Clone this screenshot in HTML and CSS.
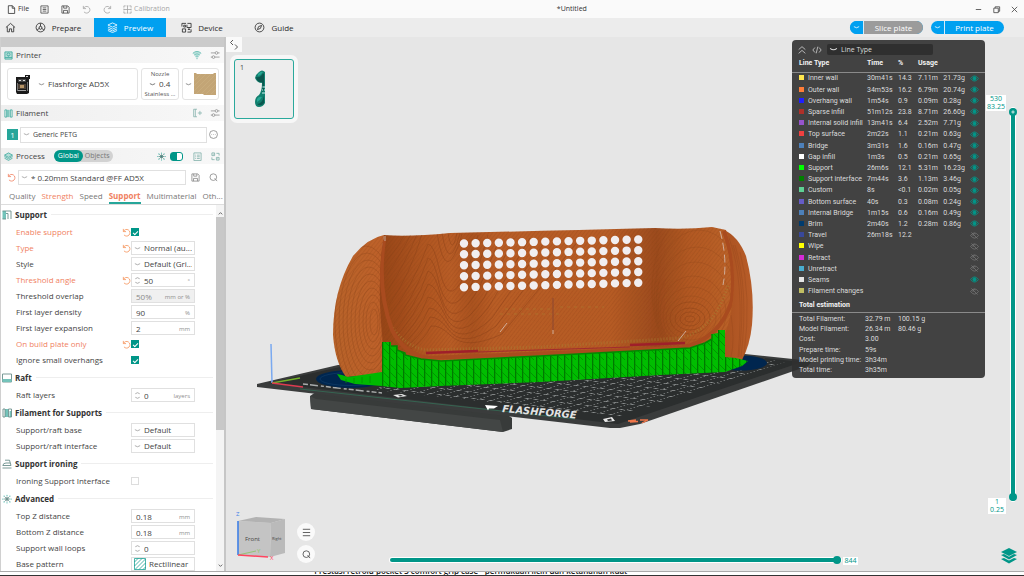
FILE: index.html
```html
<!DOCTYPE html>
<html lang="en">
<head>
<meta charset="utf-8">
<title>*Untitled</title>
<link rel="stylesheet" href="styles.css">
</head>
<body>
<svg class="defs" aria-hidden="true">
  <symbol id="chev" viewBox="0 0 8 8"><path d="M1 3 Q4 5.600 7 3"/></symbol>
  <symbol id="spin" viewBox="0 0 8 12"><path d="M1.500 4 Q4 1.600 6.500 4M1.500 8 Q4 10.400 6.500 8"/></symbol>
  <symbol id="undo" viewBox="0 0 10 10"><path d="M1.500 1v3h3M1.700 3.800A3.700 3.700 0 1 1 2.200 7.600"/></symbol>
  <symbol id="eye" viewBox="0 0 10 8"><path d="M.5 4Q5 -2 9.500 4Q5 10 .5 4Z"/><circle cx="5" cy="4" r="1.900" class="pupil"/></symbol>
  <symbol id="eye-off" viewBox="0 0 10 8"><path d="M.5 4Q5 -2 9.500 4Q5 10 .5 4ZM1.500 .5L8.500 7.500M3.500 4.500a1.600 1.600 0 0 1 2.500-2"/></symbol>
  <symbol id="sliders" viewBox="0 0 12 12"><path d="M1 3.500h5M9.500 3.500h2M1 8.500h1.500M6 8.500h5.500"/><circle cx="7.800" cy="3.500" r="1.600"/><circle cx="4.200" cy="8.500" r="1.600"/></symbol>
  <symbol id="save" viewBox="0 0 10 10"><path d="M1 1h6.500L9 2.500V9H1ZM3 1v2.500h3.500V1M2.800 9V6h4.400v3"/></symbol>
  <symbol id="search" viewBox="0 0 10 10"><circle cx="4.800" cy="4.600" r="3.700"/><path d="M6.200 5.800L9 9"/></symbol>
  <symbol id="gear" viewBox="0 0 12 12"><path d="M6 3v6M2 6h8M3 3l6 6M9 3l-6 6"/><circle cx="6" cy="6" r="1.500"/><path class="dots" d="M6 1.500h0M6 10.500h0M1 6h0M11 6h0M2.500 2.500h0M9.500 9.500h0M9.500 2.500h0M2.500 9.500h0"/></symbol>
</svg>

<header class="titlebar">
  <nav class="menu" aria-label="Menu">
    <button class="file"><svg class="i9" viewBox="0 0 10 10"><path d="M1.500 .8h4.500l2.500 2.600v6H1.500ZM5.800 .8v2.800h2.700"/></svg>File</button>
    <button aria-label="Menu"><svg class="i9" viewBox="0 0 10 10"><path d="M1 1h8v8H1ZM3 3.200h4M3 5h4M3 6.800h4"/></svg></button>
    <button aria-label="Save"><svg class="i9"><use href="#save"/></svg></button>
    <button class="off" aria-label="Undo"><svg class="i9"><use href="#undo"/></svg></button>
    <button class="off" aria-label="Redo"><svg class="i9 flip"><use href="#undo"/></svg></button>
    <button class="off calib"><svg class="i9" viewBox="0 0 10 10"><path d="M1 3V1h2M7 1h2v2M9 7v2H7M3 9H1V7M5 1v8M1 5h8M4 1h2M4 9h2M1 4v2M9 4v2"/></svg>Calibration</button>
  </nav>
  <h1>*Untitled</h1>
  <div class="winbtns">
    <button aria-label="Minimize"><svg class="i9" viewBox="0 0 10 10"><path d="M2 5h6"/></svg></button>
    <button aria-label="Restore"><svg class="i9" viewBox="0 0 10 10"><path d="M2 3.500h5V8.500H2ZM3.500 3.500V2h5v5H7"/></svg></button>
    <button aria-label="Close"><svg class="i9" viewBox="0 0 10 10"><path d="M2 2l6 6M8 2l-6 6"/></svg></button>
  </div>
</header>

<nav class="tabbar" aria-label="Views">
  <button class="home" aria-label="Home"><svg class="i11" viewBox="0 0 12 12"><path d="M1 6L6 1.500L11 6M2.500 5v5.700h2.300V7.500h2.400v3.200h2.300V5"/></svg></button>
  <button class="tab"><svg class="i11" viewBox="0 0 12 12"><circle cx="6" cy="6" r="4.800"/><path d="M6 1.500v3.300M4.600 7L2 9M7.400 7l2.600 2M6 4.600L4.500 5.400v1.700L6 8l1.500-.9V5.400Z"/></svg>Prepare</button>
  <button class="tab on"><svg class="i11" viewBox="0 0 12 12"><path d="M6 1L11 3.300L6 5.600L1 3.300ZM1 5.500L6 7.800L11 5.500M1 7.500L6 9.700L11 7.500M1 9.300L6 11.500L11 9.300"/></svg>Preview</button>
  <button class="tab"><svg class="i11" viewBox="0 0 12 12"><path d="M1 5V1.500h4.500M7 1.500h4v4.500H6.500V3M1.500 7.500h3.500V11H1.500ZM11 8v3H7M3 3.500h2v2H3ZM8.700 6v2M7.500 8.200h2.500"/></svg>Device</button>
  <button class="tab"><svg class="i11" viewBox="0 0 12 12"><circle cx="6" cy="6" r="4.800"/><path d="M8.300 3.700L7 7L3.700 8.300L5 5Z"/></svg>Guide</button>
  <div class="actions">
    <div class="pill grey"><button aria-label="Slice options"><svg class="i7"><use href="#chev"/></svg></button><button class="go">Slice plate</button></div>
    <div class="pill"><button aria-label="Print options"><svg class="i7"><use href="#chev"/></svg></button><button class="go">Print plate</button></div>
  </div>
</nav>

<main class="work">
  <aside class="side">
    <div class="strip"></div>
    <h2 class="bar"><svg class="i9 teal" viewBox="0 0 10 10"><path class="fade" d="M1 1h8v8H1Z"/><path d="M1 1h8v8H1ZM1 7.300h8M5 2.200a1.700 1.700 0 1 1 0 3.400a1.700 1.700 0 1 1 0-3.400M5 5v1"/></svg><span>Printer</span>
      <button aria-label="Connection"><svg class="i10 teal" viewBox="0 0 12 12"><path d="M1 4Q6 -.5 11 4M2.600 6Q6 3 9.400 6M4.200 8Q6 6.400 7.800 8M6 9v2"/><path class="fade" d="M1 4Q6 -.5 11 4L6 9Z"/></svg></button>
      <button aria-label="Printer settings"><svg class="i10"><use href="#sliders"/></svg></button></h2>
    <div class="cards">
      <label class="card wide"><svg class="printer" viewBox="0 0 16 22"><path fill="#1a1a1a" d="M1 4h9V2h5v4h-1v14l-2 1H2l-1-2Z"/><path fill="#444" d="M3 6h8v3H3Z"/><path fill="#ddd" d="M4 7h2v1H4ZM8 7h2v1H8ZM11 3h2v1h-2Z"/><path fill="#777" d="M2 10h1v8H2ZM12 9h1v9h-1Z"/><path fill="#4d4136" d="M3 11h8v5H3Z"/><path fill="#b69466" d="M5 12h4v3H5Z"/><path fill="#a0a0a0" d="M3 17h8v1H3Z"/></svg><svg class="i7"><use href="#chev"/></svg><select aria-label="Printer model"><option>Flashforge AD5X</option></select></label>
      <label class="card nozzle"><span>Nozzle</span><span class="size"><svg class="i7"><use href="#chev"/></svg><select aria-label="Nozzle size"><option>0.4</option></select></span><span>Stainless ...</span></label>
      <button class="card bed" aria-label="Plate type"><svg class="i7"><use href="#chev"/></svg><svg class="sheet" viewBox="0 0 22 22"><path fill="#c3a576" d="M0 0h2l1 1h16l1-1h2v22H10l-1-1H0Z"/><path stroke="#cdb285" stroke-width=".5" fill="none" d="M0 8L7 1M0 13L12 1M0 18L17 1M2 21L22 1M7 21L22 6M12 21L22 11M17 21L22 16"/></svg></button>
    </div>
    <h2 class="bar"><svg class="i9 teal" viewBox="0 0 10 10"><path class="fade" d="M3 1h4v8H3Z"/><path d="M1 1h2v8H1ZM4.500 1v8M7 1h2v8H7Z"/></svg><span>Filament</span>
      <button aria-label="Add filament"><svg class="i10 list" viewBox="0 0 12 12"><path d="M6 1.500H2v9h4M4 1.500v9M7 6h5M9.500 3.500v5"/></svg></button>
      <button aria-label="Filament settings"><svg class="i10"><use href="#sliders"/></svg></button></h2>
    <div class="filament"><button class="slot">1</button><label class="box"><svg class="i7"><use href="#chev"/></svg><select class="small" aria-label="Filament"><option>Generic PETG</option></select></label><button aria-label="More"><svg class="i9" viewBox="0 0 10 10"><circle cx="5" cy="5" r="4.400"/><path d="M2.800 5h.6M4.700 5h.6M6.600 5h.6"/></svg></button></div>
    <h2 class="bar"><svg class="i9 teal" viewBox="0 0 10 10"><path class="fade" d="M5 1L9.500 3.500L5 6L.5 3.500Z"/><path d="M5 1L9.500 3.500L5 6L.5 3.500ZM.5 5L5 7.500L9.500 5M.5 6.800L5 9.300L9.500 6.800"/></svg><span>Process</span>
      <span class="seg"><button class="on">Global</button><button>Objects</button></span><i class="grow"></i>
      <svg class="i9 gear"><use href="#gear"/></svg><input class="switch" type="checkbox" checked aria-label="Advanced mode">
      <button aria-label="List"><svg class="i9 list" viewBox="0 0 10 10"><path d="M1 1h8v8.500H1ZM2.500 3.500h1M4.500 3.500h3M2.500 5.300h1M4.500 5.300h3M2.500 7.200h1M4.500 7.200h3"/></svg></button>
      <button aria-label="Compare"><svg class="i9 list" viewBox="0 0 10 10"><path d="M1 1h3v3H1ZM6 6h3v3H6ZM6 1.500h3v2.500M4 8.500H1V6M2 2.500h1M7 7.500h1"/></svg></button></h2>
    <div class="preset"><button class="warn" aria-label="Reset preset"><svg class="i9"><use href="#undo"/></svg></button><label class="box"><svg class="i7"><use href="#chev"/></svg><select aria-label="Preset"><option>* 0.20mm Standard @FF AD5X</option></select></label><button aria-label="Save preset"><svg class="i9"><use href="#save"/></svg></button><button class="find" aria-label="Search"><svg class="i9"><use href="#search"/></svg></button></div>
    <nav class="subtabs" aria-label="Process pages"><a href="#q">Quality</a><a href="#s" class="warn">Strength</a><a href="#p">Speed</a><a href="#support" class="on">Support</a><a href="#m">Multimaterial</a><a href="#o">Oth...</a></nav>
    <div class="scroll">
      <form class="opts" id="support">
        <h3><svg class="i10" viewBox="0 0 10 10"><path class="tfill" d="M.5 1h3.500v8h-3.500Z"/><path d="M.5 1h8.500v8M6 3.500v5.500M.5 9h3.500M4 3.500h2"/></svg>Support</h3>
        <div class="row mod"><label for="f1">Enable support</label><svg class="undo"><use href="#undo"/></svg><input id="f1" type="checkbox" checked></div>
        <div class="row mod"><label for="f2">Type</label><svg class="undo"><use href="#undo"/></svg><span class="box"><svg class="i7"><use href="#chev"/></svg><select id="f2"><option>Normal (au...</option></select></span></div>
        <div class="row"><label for="f3">Style</label><span class="box"><svg class="i7"><use href="#chev"/></svg><select id="f3"><option>Default (Gri...</option></select></span></div>
        <div class="row mod"><label for="f4">Threshold angle</label><svg class="undo"><use href="#undo"/></svg><span class="box"><svg class="spin"><use href="#spin"/></svg><input id="f4" value="50"><em>°</em></span></div>
        <div class="row"><label for="f5">Threshold overlap</label><span class="box dis"><input id="f5" value="50%" disabled><em>mm or %</em></span></div>
        <div class="row"><label for="f6">First layer density</label><span class="box"><input id="f6" value="90"><em>%</em></span></div>
        <div class="row"><label for="f7">First layer expansion</label><span class="box"><input id="f7" value="2"><em>mm</em></span></div>
        <div class="row mod"><label for="f8">On build plate only</label><svg class="undo"><use href="#undo"/></svg><input id="f8" type="checkbox" checked></div>
        <div class="row"><label for="f9">Ignore small overhangs</label><input id="f9" type="checkbox" checked></div>
        <h3><svg class="i10" viewBox="0 0 10 10"><path d="M.5 1h9v8h-9Z"/><path class="tfill" d="M.5 6h9v3h-9Z"/></svg>Raft</h3>
        <div class="row"><label for="f10">Raft layers</label><span class="box"><svg class="spin"><use href="#spin"/></svg><input id="f10" value="0"><em>layers</em></span></div>
        <h3><svg class="i10" viewBox="0 0 10 10"><path class="tfill" d="M3 1h3v8H3ZM7.500 3h2v6h-2Z"/><path d="M1 1h2v8H1ZM6.500 1h3v8h-3Z"/></svg>Filament for Supports</h3>
        <div class="row"><label for="f11">Support/raft base</label><span class="box"><svg class="i7"><use href="#chev"/></svg><select id="f11"><option>Default</option></select></span></div>
        <div class="row"><label for="f12">Support/raft interface</label><span class="box"><svg class="i7"><use href="#chev"/></svg><select id="f12"><option>Default</option></select></span></div>
        <h3><svg class="i10 teal" viewBox="0 0 10 10"><path d="M3 1.200h4.500L9 6.500H.8Q1.200 4 4 4h4.200M.5 9h9"/></svg>Support ironing</h3>
        <div class="row"><label for="f13">Ironing Support Interface</label><input id="f13" type="checkbox"></div>
        <h3><svg class="i10"><use href="#gear"/></svg>Advanced</h3>
        <div class="row"><label for="f14">Top Z distance</label><span class="box"><input id="f14" value="0.18"><em>mm</em></span></div>
        <div class="row"><label for="f15">Bottom Z distance</label><span class="box"><input id="f15" value="0.18"><em>mm</em></span></div>
        <div class="row"><label for="f16">Support wall loops</label><span class="box"><svg class="spin"><use href="#spin"/></svg><input id="f16" value="0"></span></div>
        <div class="row"><label for="f17">Base pattern</label><span class="box"><svg class="hatch" viewBox="0 0 12 12"><path d="M.5 .5h11v11H.5ZM.5 4L4 .5M.5 8L8 .5M1 11.500L11.500 1M5 11.500L11.500 5M9 11.500L11.500 9"/></svg><select id="f17"><option>Rectilinear</option></select></span></div>
      </form>
      <div class="sbar" aria-hidden="true"><svg class="i7" viewBox="0 0 8 8"><path d="M2 5L4 3L6 5"/></svg><i></i><svg class="i7" viewBox="0 0 8 8"><path d="M2 3L4 5L6 3"/></svg></div>
    </div>
  </aside>

  <section class="view" aria-label="Preview">
    <svg class="scene" viewBox="226 37 798 534" role="img" aria-label="Sliced model on the build plate">
      <defs>
        <linearGradient id="wood" gradientUnits="userSpaceOnUse" x1="380" y1="0" x2="735" y2="0">
          <stop offset="0" stop-color="#964518"/><stop offset=".12" stop-color="#af5621"/><stop offset=".2" stop-color="#b85d27"/><stop offset=".26" stop-color="#aa5320"/><stop offset=".32" stop-color="#b85d27"/><stop offset=".65" stop-color="#b65c26"/><stop offset=".78" stop-color="#9c4c1e"/><stop offset=".87" stop-color="#b25a24"/><stop offset="1" stop-color="#bb6229"/>
        </linearGradient>
        <linearGradient id="lobe"><stop offset="0" stop-color="#b8642a"/><stop offset="1" stop-color="#c0602a"/></linearGradient>
        <linearGradient id="lobe2"><stop offset="0" stop-color="#a8501f"/><stop offset="1" stop-color="#b85d29"/></linearGradient>
        <pattern id="fine" width="3" height="3" patternUnits="userSpaceOnUse" patternTransform="rotate(38)"><path d="M0 0V3" stroke="#7d3a12" stroke-width="1" opacity=".3"/></pattern>
        <pattern id="ribs" width="7" height="40" patternUnits="userSpaceOnUse" patternTransform="translate(382 0)"><rect width="7" height="40" fill="#00bd00"/><path d="M0 0V40" stroke="#007a00" stroke-width="2.600"/><path d="M1 4l6 6M1 12l6 6M1 20l6 6M1 28l6 6M1 36l6 6" stroke="#009600" stroke-width="1"/></pattern>
        <pattern id="grid" width="10" height="10" patternUnits="userSpaceOnUse" patternTransform="matrix(1.200 .14 1.500 -.45 382 388)"><path d="M0 0H10M0 0V10" stroke="#a4a8a8" stroke-width="1.200" fill="none"/></pattern>
        <clipPath id="cb"><path d="M384 235Q410 237 450 233Q540 231 655 228Q685 230 712 227L726 230Q737 262 733 300Q730 325 722 340L680 352L540 359Q440 366 425 362Q398 358 383 345Q376 280 384 235Z"/></clipPath>
        <clipPath id="cl"><path d="M384 235Q368 238 353 256Q333 290 333 335Q335 362 346 377L386 374L400 350Q376 280 384 235Z"/></clipPath>
      </defs>
      <path fill="#383b3a" d="M310 396L316 392L506 414L512 418V429L503 432L311 409Z"/>
      <path fill="#434645" d="M310 396L316 399L500 420L503 432L311 409Z"/>
      <path fill="#3a3c3c" d="M257 384L338 365L745 354L812 361L808 366L640 424L620 428L610 428L257 387Z"/>
      <path fill="#2b2e2e" d="M268 383L340 367L745 356L802 362L618 424Z"/>
      <path fill="url(#grid)" opacity=".8" d="M382 386L440 386L660 375L745 356L785 362L620 416L375 390Z"/>
      <path stroke="#34755a" stroke-width=".7" fill="none" d="M300 389L575 419"/>
      <path stroke="#c9cccc" stroke-width="1.500" stroke-dasharray="5 2 8 3 3 2" opacity=".8" fill="none" d="M303 384L382 393"/>
      <path fill="#e8e8e8" d="M393 395l9-1l5 2l-9 1.500ZM603 419l9-2l3 4l-10 1Z"/><path fill="#2b2e2e" d="M398 395.500l3-.5l2 1l-3 .4ZM607 419.500l4-1l1 2l-4 .5Z"/>
      <path fill="#fff" d="M485 405l13 1l-4 2.500h-5l-1 2Z"/>
      <text class="brand" transform="translate(502 412) rotate(5)">FLASHFORGE</text>
      <path fill="none" stroke="#f0764a" stroke-width="1.300" d="M628 421l8-1M630 422l8-.5M640 420h8l-6 3"/>
      <ellipse cx="351" cy="379" rx="35" ry="9" fill="#00264f"/><ellipse cx="741" cy="363" rx="26" ry="7.500" fill="#00264f"/>
      <ellipse cx="351" cy="379" rx="31" ry="6.500" fill="none" stroke="#123f6c" stroke-width=".6"/>
      <path fill="url(#lobe2)" d="M724 230Q738 236 746 256Q755 290 752 325Q750 345 742 360L720 358Z"/>
      <path fill="none" stroke="#8f421a" opacity=".45" stroke-width=".7" d="M729 238Q745 280 738 357M735 245Q749 290 741 357M731 315Q735 340 731 357M733 245Q747 285 739 357M740 252Q752 295 744 355"/>
      <g clip-path="url(#cl)"><rect x="330" y="230" width="72" height="150" fill="url(#lobe)"/><rect x="330" y="230" width="72" height="150" fill="url(#fine)"/>
        <g fill="none" stroke="#8f461a" stroke-width=".8" opacity=".5"><ellipse cx="374" cy="322" rx="4" ry="13"/><ellipse cx="373" cy="322" rx="7" ry="20"/><ellipse cx="373" cy="322" rx="10" ry="27"/><ellipse cx="372" cy="322" rx="13" ry="34"/><ellipse cx="371" cy="322" rx="16" ry="41"/><ellipse cx="370" cy="322" rx="19" ry="48"/><ellipse cx="369" cy="322" rx="22" ry="55"/><ellipse cx="368" cy="322" rx="25" ry="62"/><ellipse cx="367" cy="322" rx="28" ry="69"/><ellipse cx="366" cy="322" rx="31" ry="76"/></g></g>
      <g clip-path="url(#cb)"><rect x="375" y="225" width="365" height="145" fill="url(#wood)"/><rect x="375" y="225" width="365" height="145" fill="url(#fine)"/>
        <g fill="none" stroke="#8d4318" stroke-width=".9" opacity=".55">
          <path d="M386 320Q414 285 428 244Q434 244 440 272Q450 315 470 262L478 235"/>
          <path d="M385 335Q414 300 428 258Q434 258 440 287Q452 325 476 275L488 235"/>
          <path d="M387 340Q416 308 428 271Q435 272 441 297Q453 335 480 286L500 238"/>
          <path d="M390 343Q416 317 428 284Q436 285 443 306Q455 341 484 298L514 238"/>
          <path d="M394 346Q418 325 428 297Q437 298 445 315Q458 345 488 308L530 238"/>
          <path d="M398 348Q420 331 429 308Q437 308 446 322Q460 348 492 318L546 240"/>
          <path d="M402 350Q422 336 430 317Q439 317 448 329Q463 350 496 326L560 242"/>
          <path d="M408 351Q424 341 431 326Q440 325 450 335Q466 351 502 334L576 244"/>
          <path d="M389 305Q410 275 422 234M388 290Q406 262 417 234M387 275Q402 252 411 234M387 260Q398 248 405 234M437 233Q446 290 462 234M442 233Q449 275 460 233M448 233Q452 257 457 233"/>
          <ellipse cx="690" cy="319" rx="5" ry="3"/><ellipse cx="690" cy="319" rx="10" ry="7"/><ellipse cx="690" cy="319" rx="15" ry="11"/><ellipse cx="690" cy="318" rx="20" ry="16"/>
        </g>
        <g fill="none" stroke="#8d4318" stroke-width=".7" opacity=".4">
          <ellipse cx="691" cy="318" rx="25" ry="22"/><ellipse cx="692" cy="316" rx="29" ry="29"/><ellipse cx="693" cy="313" rx="33" ry="37"/><ellipse cx="695" cy="308" rx="37" ry="46"/><ellipse cx="697" cy="303" rx="41" ry="56"/><ellipse cx="699" cy="297" rx="45" ry="67"/><ellipse cx="701" cy="290" rx="49" ry="80"/>
        </g>
        <g fill="none" stroke="#a78a38" opacity=".45"><path d="M388 320Q400 344 425 350L540 347L680 338Q715 330 728 285" stroke-width="3" stroke-dasharray="1 2"/><path d="M505 309h50M560 307h44M500 314h60" stroke-dasharray="3 4"/></g>
        <path d="M384 240Q377 290 392 330Q404 354 428 358L680 348Q720 340 732 300Q736 262 724 231" fill="none" stroke="#a94b1f" stroke-width="4"/>
        <path fill="none" stroke="#9f1f2a" stroke-width="2.500" d="M426 353L478 351M630 345L685 343"/><path fill="none" stroke="#9f2630" d="M478 352L630 347"/>
      </g>
      <g stroke="#f1eef0" stroke-width="8.400" stroke-linecap="round" stroke-dasharray="0 11.620" fill="none"><path d="M464 243.500L639 239.500M464 254.300L639 250.300M464 265.300L639 261.200M464 276.200L639 272M464 287.200L639 282.800"/></g>
      <g stroke="#ddd1cc" stroke-width=".7" fill="none"><path d="M720 231Q728 260 723 285" stroke-dasharray="8 4"/><path d="M500 332l7-9M678 341l8-10M553 334v-4M385 236v5"/></g>
      <path fill="none" stroke="#7c4038" stroke-width=".7" d="M553 298v32"/>
      <path fill="url(#ribs)" d="M382 342h9v4h6v4l8 3v2l16 4l20 2L540 356L690 348L705 343L712 339V334L718 333V330H725V357L736 358L748 361L742 366L725 372L660 375L540 382L440 386L400 388L382 386Z"/>
      <path fill="none" stroke="#008a00" stroke-width="1.500" d="M391 346h6v4l8 3v2l16 4l20 2L540 356L690 348L705 343L712 339V334"/>
      <path fill="#00b900" d="M337 374L342 375L348 377L362 375L382 372V386L355 384L341 380Z"/>
      <path fill="none" stroke="#008f00" stroke-width=".8" d="M346 379v4M354 378v5M362 377v6M370 376v7"/>
      <path stroke="#7aa9f0" stroke-width="1.500" d="M271 344L272 383"/><path stroke="#74b22a" stroke-width="1.500" d="M272 383L300 378"/><path stroke="#dd3c50" stroke-width="1.500" d="M272 383L303 387"/>
    </svg>

    <button class="fold" aria-label="Collapse sidebar"><svg viewBox="0 0 15 15"><path d="M7 3L4.500 5.500L7 8M9 7.500L11.500 10L9 12.500"/></svg></button>
    <button class="thumb"><span>1</span><svg viewBox="0 0 20 40" aria-hidden="true"><path fill="#12806f" d="M5 3Q8 0 11 3V34Q9 38 5 38Q1 38 1 33Q1 28 5 26Q8 22 8 14Q3 14 1 9Q2 5 5 3Z"/><path fill="#0a574e" d="M2 8Q7 9 9 4L10 5V20L8 24Q9 16 8 13Q3 14 2 8ZM3 35Q8 35 10 27V34Q7 38 3 35Z"/><path fill="#26a694" d="M4 5Q7 2 9 3Q7 6 4 7ZM3 30Q5 27 8 28Q6 32 3 33Z"/><path stroke="#dff" fill="none" d="M8.500 18h2.500M8 21h1M10 21h1M8 24h3"/></svg></button>

    <section class="legend" aria-label="Line types">
      <div class="lhead"><button aria-label="Collapse"><svg class="i10" viewBox="0 0 12 12"><path d="M2 5.500L6 2L10 5.500M2 10L6 6.500L10 10"/></svg></button><button aria-label="G-code"><svg class="i10" viewBox="0 0 12 12"><path d="M3.500 3L1 6L3.500 9M8.500 3L11 6L8.500 9M7 2L5 10"/></svg></button><label><svg class="i9"><use href="#chev"/></svg><select aria-label="Colour scheme"><option>Line Type</option></select></label></div>
      <table class="types">
        <thead><tr><th>Line Type</th><th>Time</th><th>%</th><th colspan="3">Usage</th></tr></thead>
        <tbody>
        <tr><td><i class="c1"></i>Inner wall</td><td>30m41s</td><td>14.3</td><td>7.11m</td><td>21.73g</td><td><svg><use href="#eye"/></svg></td></tr>
        <tr><td><i class="c2"></i>Outer wall</td><td>34m53s</td><td>16.2</td><td>6.79m</td><td>20.74g</td><td><svg><use href="#eye"/></svg></td></tr>
        <tr><td><i class="c3"></i>Overhang wall</td><td>1m54s</td><td>0.9</td><td>0.09m</td><td>0.28g</td><td><svg><use href="#eye"/></svg></td></tr>
        <tr><td><i class="c4"></i>Sparse infill</td><td>51m12s</td><td>23.8</td><td>8.71m</td><td>26.60g</td><td><svg><use href="#eye"/></svg></td></tr>
        <tr><td><i class="c5"></i>Internal solid infill</td><td>13m41s</td><td>6.4</td><td>2.52m</td><td>7.71g</td><td><svg><use href="#eye"/></svg></td></tr>
        <tr><td><i class="c6"></i>Top surface</td><td>2m22s</td><td>1.1</td><td>0.21m</td><td>0.63g</td><td><svg><use href="#eye"/></svg></td></tr>
        <tr><td><i class="c7"></i>Bridge</td><td>3m31s</td><td>1.6</td><td>0.16m</td><td>0.47g</td><td><svg><use href="#eye"/></svg></td></tr>
        <tr><td><i class="c8"></i>Gap infill</td><td>1m3s</td><td>0.5</td><td>0.21m</td><td>0.65g</td><td><svg><use href="#eye"/></svg></td></tr>
        <tr><td><i class="c9"></i>Support</td><td>26m6s</td><td>12.1</td><td>5.31m</td><td>16.23g</td><td><svg><use href="#eye"/></svg></td></tr>
        <tr><td><i class="c10"></i>Support interface</td><td>7m44s</td><td>3.6</td><td>1.13m</td><td>3.46g</td><td><svg><use href="#eye"/></svg></td></tr>
        <tr><td><i class="c11"></i>Custom</td><td>8s</td><td>&lt;0.1</td><td>0.02m</td><td>0.05g</td><td><svg><use href="#eye"/></svg></td></tr>
        <tr><td><i class="c12"></i>Bottom surface</td><td>40s</td><td>0.3</td><td>0.08m</td><td>0.24g</td><td><svg><use href="#eye"/></svg></td></tr>
        <tr><td><i class="c7"></i>Internal Bridge</td><td>1m15s</td><td>0.6</td><td>0.16m</td><td>0.49g</td><td><svg><use href="#eye"/></svg></td></tr>
        <tr><td><i class="c13"></i>Brim</td><td>2m40s</td><td>1.2</td><td>0.28m</td><td>0.86g</td><td><svg><use href="#eye"/></svg></td></tr>
        <tr><td><i class="c14"></i>Travel</td><td>26m18s</td><td>12.2</td><td></td><td></td><td><svg class="hid"><use href="#eye-off"/></svg></td></tr>
        <tr><td><i class="c15"></i>Wipe</td><td></td><td></td><td></td><td></td><td><svg class="hid"><use href="#eye-off"/></svg></td></tr>
        <tr><td><i class="c16"></i>Retract</td><td></td><td></td><td></td><td></td><td><svg class="hid"><use href="#eye-off"/></svg></td></tr>
        <tr><td><i class="c17"></i>Unretract</td><td></td><td></td><td></td><td></td><td><svg class="hid"><use href="#eye-off"/></svg></td></tr>
        <tr><td><i class="c18"></i>Seams</td><td></td><td></td><td></td><td></td><td><svg><use href="#eye"/></svg></td></tr>
        <tr><td><i class="c19"></i>Filament changes</td><td></td><td></td><td></td><td></td><td><svg class="hid"><use href="#eye-off"/></svg></td></tr>
        </tbody>
      </table>
      <h3>Total estimation</h3>
      <table class="totals"><tbody>
        <tr><th>Total Filament:</th><td>32.79 m</td><td>100.15 g</td></tr>
        <tr><th>Model Filament:</th><td>26.34 m</td><td>80.46 g</td></tr>
        <tr><th>Cost:</th><td>3.00</td><td></td></tr>
        <tr><th>Prepare time:</th><td>59s</td><td></td></tr>
        <tr><th>Model printing time:</th><td>3h34m</td><td></td></tr>
        <tr><th>Total time:</th><td>3h35m</td><td></td></tr>
      </tbody></table>
    </section>

    <input class="vslide" type="range" min="1" max="530" value="530" aria-label="Top layer">
    <input class="vslide low" type="range" min="1" max="530" value="1" aria-label="Bottom layer">
    <output class="tip top">530<br>83.25</output>
    <output class="tip bottom">1<br>0.25</output>
    <input class="hslide" type="range" min="1" max="844" value="844" aria-label="Move">
    <output class="tip move">844</output>

    <svg class="cube" viewBox="232 508 60 56" role="img" aria-label="View cube">
      <path fill="#c4c4c4" d="M238 521L271 523L270 557L238 555Z"/><path fill="#bababa" d="M271 523L285 519L285 553L270 557Z"/><path fill="#b2b2b2" d="M238 521L256 517L285 519L271 523Z"/>
      <text x="245" y="541" class="face">Front</text><text x="272" y="540" class="face tiny">Right</text>
      <path stroke="#3f80e6" stroke-width="1.600" d="M238 521V555"/><path stroke="#8cc46a" d="M238 555L256 551"/><path stroke="#ff4560" stroke-width="1.600" d="M238 555L268 557"/>
      <text x="236" y="516" class="face z">Z</text><text x="257" y="553" class="face y">Y</text><text x="270" y="560" class="face x">X</text>
    </svg>
    <div class="rounds"><button aria-label="List"><svg class="i11" viewBox="0 0 12 12"><path d="M2 2.500h8M2 6h8M2 9.500h8"/></svg></button><button aria-label="Zoom"><svg class="i9"><use href="#search"/></svg></button></div>
    <button class="layers" aria-label="Layers"><svg viewBox="0 0 18 18"><path d="M9 1L17 5L9 9L1 5ZM1 8L4 7L9 9.700L14 7L17 8L9 12.500ZM1 12L4 11L9 13.500L14 11L17 12L9 16.500Z"/></svg></button>
  </section>
</main>
<footer class="under"><p>•&nbsp; Prestasi retroid pocket 3 comfort grip case - permukaan licin dan ketahanan kuat</p></footer>
</body>
</html>
```
FILE: styles.css
```css
:root { --teal: #009688; --warn: #f08162; --blue: #00a0f0; }
* { box-sizing: border-box; }
body { margin: 0; height: 100vh; overflow: hidden; display: grid; grid-template-rows: 18px 19px 1fr 5px; font: 8px/10px "Open Sans", "Noto Sans", sans-serif; color: #444; background: #fafafa; }
button, input, select { font: inherit; color: inherit; border: 0; padding: 0; margin: 0; background: none; appearance: none; outline: 0; }
button { display: flex; align-items: center; }
select, input { min-width: 0; }
h1, h2, h3, p { margin: 0; font-size: inherit; font-weight: 400; }
svg { fill: none; stroke: currentColor; stroke-width: .9; flex: none; display: block; }
.defs { position: absolute; width: 0; height: 0; }
.i7 { width: 7px; height: 7px; }
.i9 { width: 9px; height: 9px; }
.i10 { width: 10px; height: 10px; }
.i11 { width: 11px; height: 11px; }
.flip { transform: scaleX(-1); }
.grow { flex: 1; }
.fade { fill: #8fd0c8; stroke: none; opacity: .6; }
.tfill { fill: #74c3ba; stroke: none; }
svg.teal { color: #3aa99d; }
.dots { stroke: #4db6ab; stroke-width: 1.500; stroke-linecap: round; }

.titlebar { display: flex; align-items: center; background: #fafafa; font-size: 7px; color: #4a4a4a; }
.menu { display: flex; align-items: center; gap: 12px; padding-left: 7px; }
.menu .file { gap: 2px; color: #333; margin-right: -1px; }
.menu .calib { gap: 2px; margin-left: -1px; }
.menu .off { color: #a6a6a6; }
.titlebar h1 { flex: 1; text-align: center; color: #333; }
.winbtns { display: flex; gap: 9px; padding-right: 5px; color: #444; }

.tabbar { display: flex; background: #ececec; color: #2b2b2b; }
.home { width: 22px; padding-left: 5px; }
.tab { width: 72px; gap: 6px; justify-content: center; }
.tab.on { background: var(--blue); color: #fff; }
.actions { display: flex; align-items: center; gap: 8px; margin-left: auto; padding-right: 20px; }
.pill { display: flex; height: 13px; border-radius: 7px; overflow: hidden; background: var(--blue); color: #fff; }
.pill button { width: 13px; justify-content: center; }
.pill .go { width: 60px; border-left: 1px solid #d8ecf7; }
.grey .go { background: #9b9b9b; }
.grey button:first-child { background: var(--blue); }

.work { display: grid; grid-template-columns: 226px 1fr; min-height: 0; }
.side { display: flex; flex-direction: column; min-height: 0; background: #fff; border-right: 2px solid #c6c6c6; border-left: 1px solid #d0d0d0; }
.strip { height: 10px; background: #cbcbcb; }
.bar { display: flex; align-items: center; height: 16px; gap: 8px; padding: 0 4px 0 3px; background: linear-gradient(90deg, #efefef, #f8f8f8); }
.bar > svg:first-child { margin-right: -5px; }
.bar > span:nth-child(2) { margin-right: auto; }
.bar button { color: #888; }
.bar .list { color: #7fb0a9; }
.cards { display: flex; gap: 3px; height: 42px; padding: 5px 5px 5px 6px; }
.card { display: flex; align-items: center; justify-content: center; border: 1px solid #e3e3e3; border-radius: 3px; background: #fff; color: #777; }
.card select { color: #444; }
.card.wide { flex: 1; justify-content: flex-start; padding-left: 7px; gap: 3px; }
.printer { width: 16px; height: 22px; stroke: none; margin-right: 4px; }
.nozzle { width: 38px; flex-direction: column; font-size: 6px; color: #555; }
.nozzle .size { display: flex; align-items: center; gap: 3px; font-size: 8px; }
.bed { width: 37px; gap: 2px; }
.sheet { width: 22px; height: 22px; stroke: none; }
.box { display: flex; align-items: center; gap: 3px; height: 14px; padding: 0 2px; border: 1px solid #e0e0e0; background: #fff; color: #999; }
.box select, .box input { flex: 1; color: #444; height: 12px; }
.box > input:first-child { padding-left: 2px; }
.box em { font-style: normal; font-size: 6px; padding: 1px 2px 0 0; color: #8f8f8f; }
.box.dis { background: #f0f0f0; }
.box.dis input { color: #8a8a8a; }
.filament, .preset { display: flex; align-items: center; height: 27px; padding: 0 6px 0 6px; gap: 2px; color: #888; }
.filament .box { flex: 1; height: 16px; }
.small { font-size: 7px; }
.slot { width: 11px; height: 11px; justify-content: center; background: #26a69a; color: #fff; }
.preset .box { flex: 1; height: 15px; margin-right: 3px; }
.preset .find { margin-left: 7px; }
.warn { color: var(--warn); }
.seg { display: flex; height: 12px; margin-left: 1px; background: #d2d2d2; border-radius: 6px; font-size: 7px; }
.bar .seg button { padding: 0 4px 0 2px; color: #777; }
.bar .seg .on { padding: 0 4px; background: var(--teal); color: #fff; border-radius: 6px; }
.bar .gear { margin-right: -4px; color: #4b807a; }
.switch { width: 13px; height: 9px; border: 1px solid var(--teal); border-radius: 3px; background: linear-gradient(90deg, var(--teal) 55%, #fff 55%); }
.switch + button { margin: 0 1px 0 2px; }
.subtabs { display: flex; gap: 6px; height: 14px; padding-left: 8px; border-bottom: 1px solid #ddd; white-space: nowrap; overflow: hidden; }
.subtabs a { color: #777; text-decoration: none; }
.subtabs a.warn { color: var(--warn); }
.subtabs a.on { color: var(--warn); font-weight: 700; border-bottom: 2px solid #26a69a; }

.scroll { flex: 1; min-height: 0; display: flex; overflow: hidden; }
.opts { flex: 1; overflow: hidden; }
.opts h3 { display: flex; align-items: center; gap: 3px; height: 19px; padding-left: 1px; font-weight: 700; color: #333; }
.opts h3::after { content: ""; flex: 1; height: 1px; margin: 0 3px 0 1px; background: #eee; }
.opts h3 svg { color: #6b8f8b; }
.row { display: flex; align-items: center; height: 16px; padding-left: 15px; }
.row label { width: 115px; white-space: nowrap; }
.row.mod label { width: 106px; color: var(--warn); }
.row .undo { width: 9px; height: 9px; color: #f5935a; }
.row .box { width: 64px; }
.row .spin { width: 7px; height: 11px; }
.row .hatch { width: 12px; height: 12px; color: var(--teal); stroke-width: .7; }
.row input[type=checkbox] { width: 8px; height: 8px; border: 1px solid #ddd; display: grid; place-items: center; }
.row input[type=checkbox]:checked { background: var(--teal); border-color: var(--teal); }
.row input[type=checkbox]:checked::after { content: ""; width: 4px; height: 2px; border: solid #fff; border-width: 0 0 1px 1px; transform: rotate(-45deg); }
.sbar { width: 8px; display: flex; flex-direction: column; align-items: center; padding: 5px 0 2px; background: #f4f4f4; color: #444; }
.sbar i { width: 8px; height: 213px; margin-bottom: auto; background: #c8c8c8; }

.view { position: relative; background: #e6e6e6; overflow: hidden; }
.scene { width: 100%; height: 100%; stroke: none; }
.brand { font: italic 700 10px "DejaVu Sans", sans-serif; fill: #e2e2e2; }
.fold { position: absolute; left: 0; top: 0; width: 16px; height: 15px; background: #fafafa; }
.fold svg { width: 15px; height: 15px; }
.thumb { position: absolute; left: 8px; top: 22px; width: 60px; height: 60px; border: 1px solid #2aa99c; border-radius: 3px; background: #ededed; box-shadow: 0 0 0 4px #f7f7f7; justify-content: center; }
.thumb span { position: absolute; left: 5px; top: 3px; font-size: 7px; }
.thumb svg { width: 20px; height: 40px; stroke: none; }

.legend { position: absolute; right: 39px; top: 3px; width: 193px; padding: 4px 0 3px; border-radius: 4px; background: rgba(48, 48, 48, .9); color: #dcdcdc; font: 7px/10px Roboto, "Open Sans", sans-serif; }
.lhead { display: flex; align-items: center; gap: 5px; padding-left: 5px; height: 11px; }
.lhead label { display: flex; align-items: center; gap: 3px; width: 106px; height: 11px; padding-left: 2px; background: #2f2f2f; border-radius: 2px; }
.lhead select { font: 7px/10px "Open Sans", sans-serif; }
.legend table { border-collapse: collapse; width: 100%; table-layout: fixed; line-height: 8px; }
.legend td, .legend th { padding: 0; text-align: left; white-space: nowrap; }
.types { height: 242px; }
.types thead tr { height: 17px; border-bottom: 1px solid #8a8a8a; }
.types thead th { color: #f2f2f2; }
.types th:first-child { width: 75px; padding-left: 7px; }
.types th:nth-child(2) { width: 31px; }
.types th:nth-child(3) { width: 20px; }
.types td:nth-child(5) { padding-left: 3px; }
.types td:first-child { padding-left: 7px; }
.types td i { display: inline-block; width: 5px; height: 5px; margin-right: 4px; }
.types td svg { width: 9px; height: 7px; margin-left: 7px; color: var(--teal); }
.pupil { fill: var(--teal); }
.types td svg.hid { color: #757575; }
.legend h3 { height: 16px; padding: 3px 7px 0; font-weight: 700; color: #f2f2f2; border-bottom: 1px solid #8a8a8a; margin-bottom: 1px; }
.totals { height: 61px; }
.totals th { width: 73px; padding-left: 7px; font-weight: 400; }
.totals td:nth-child(2) { width: 33px; }
.c1 { background: #ffe64d; } .c2 { background: #ff7d38; } .c3 { background: #1f1fff; } .c4 { background: #b03029; }
.c5 { background: #9654cc; } .c6 { background: #f04040; } .c7 { background: #4d80ba; } .c8 { background: #fff; }
.c9 { background: #00ff00; } .c10 { background: #008000; } .c11 { background: #5ed194; } .c12 { background: #665cc7; }
.c13 { background: #003b6e; } .c14 { background: #38489b; } .c15 { background: #ffff00; } .c16 { background: #d62ad6; }
.c17 { background: #49add0; } .c18 { background: #e6e6e6; } .c19 { background: #c1be63; }

.vslide { position: absolute; right: 7px; top: 71px; bottom: 70px; width: 8px; height: auto; writing-mode: vertical-lr; direction: rtl; }
.vslide::-webkit-slider-runnable-track { width: 4px; margin: 0 auto; background: var(--teal); box-shadow: 0 0 0 1px #fff; border-radius: 2px; }
.vslide.low { pointer-events: none; }
.vslide.low::-webkit-slider-runnable-track { background: none; box-shadow: none; }
.vslide::-webkit-slider-thumb { appearance: none; width: 8px; height: 8px; margin-left: -2px; border-radius: 50%; background: radial-gradient(circle, #9fd6d0 1px, var(--teal) 2px); }
.vslide.low::-webkit-slider-thumb, .hslide::-webkit-slider-thumb { background: var(--teal); }
.hslide { position: absolute; left: 164px; right: 183px; bottom: 7px; width: auto; height: 8px; }
.hslide::-webkit-slider-runnable-track { height: 4px; background: var(--teal); box-shadow: 0 0 0 1px #fff; border-radius: 2px; }
.hslide::-webkit-slider-thumb { appearance: none; width: 8px; height: 8px; margin-top: -2px; border-radius: 50%; }
.tip { position: absolute; background: #fff; color: var(--teal); font-size: 7px; line-height: 8px; text-align: center; padding: 0 1px; }
.tip.top { right: 18px; top: 58px; width: 20px; }
.tip.bottom { right: 18px; bottom: 57px; width: 18px; }
.tip.move { right: 166px; bottom: 6px; width: 15px; }

.cube { position: absolute; left: 6px; bottom: 7px; width: 60px; height: 56px; stroke: none; }
.face { font-size: 6px; fill: #444; }
.tiny { font-size: 4px; }
.z { fill: #3f80e6; } .y { fill: #8cc46a; } .x { fill: #ff4560; }
.rounds { position: absolute; left: 71px; bottom: 8px; display: grid; gap: 4px; }
.rounds button { width: 18px; height: 18px; justify-content: center; border-radius: 50%; background: #fafafa; }
.layers { position: absolute; right: 6px; bottom: 6px; color: var(--teal); }
.layers svg { width: 18px; height: 18px; fill: currentColor; stroke: none; }
.under { overflow: hidden; display: flex; align-items: flex-end; background: #fff; border-top: 1px solid #aaa; border-bottom: 1px solid #333; }
.under p { padding-left: 307px; white-space: nowrap; line-height: 8px; font-weight: 600; color: #111; }
```
